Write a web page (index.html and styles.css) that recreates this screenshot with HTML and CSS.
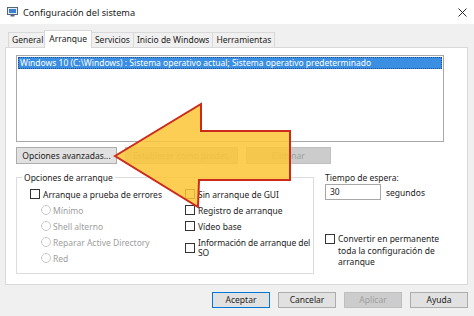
FILE: index.html
```html
<!DOCTYPE html>
<html lang="es">
<head>
<meta charset="utf-8">
<title>Configuración del sistema</title>
<link rel="stylesheet" href="styles.css">
</head>
<body>
<div class="window">
  <header class="titlebar">
    <svg class="title-icon" viewBox="0 0 11 10" width="11" height="10">
      <rect x="0.5" y="0.5" width="10" height="7" fill="#e8eef6" stroke="#56657a"/>
      <rect x="2" y="2" width="7" height="4" fill="#3b7fd0"/>
      <rect x="3.5" y="8" width="4" height="1.5" fill="#56657a"/>
    </svg>
    <span class="title">Configuración del sistema</span>
    <svg class="close" viewBox="0 0 9 9" width="9" height="9">
      <path d="M0.5 0.5 L8.5 8.5 M8.5 0.5 L0.5 8.5" stroke="#2b2b2b" stroke-width="1" fill="none"/>
    </svg>
  </header>
  <div class="body">
    <div class="tabs">
      <div class="tab">General</div>
      <div class="tab active">Arranque</div>
      <div class="tab">Servicios</div>
      <div class="tab">Inicio de Windows</div>
      <div class="tab">Herramientas</div>
    </div>
    <div class="panel">
      <div class="listbox">
        <div class="item">Windows 10 (C:\Windows) : Sistema operativo actual; Sistema operativo predeterminado</div>
      </div>
      <div class="btnrow">
        <button class="btn w-adv">Opciones avanzadas...</button>
        <button class="btn disabled w-set">Establecer como predet.</button>
        <button class="btn disabled w-del">Eliminar</button>
      </div>
      <div class="lower">
        <fieldset class="group">
          <legend>Opciones de arranque</legend>
          <div class="group-body">
            <div class="col-left">
              <div class="row"><span class="check"></span>Arranque a prueba de errores</div>
              <div class="row indent dis"><span class="radio"></span>Mínimo</div>
              <div class="row indent dis"><span class="radio"></span>Shell alterno</div>
              <div class="row indent dis"><span class="radio"></span>Reparar Active Directory</div>
              <div class="row indent dis"><span class="radio"></span>Red</div>
            </div>
            <div class="col-right">
              <div class="row"><span class="check"></span>Sin arranque de GUI</div>
              <div class="row"><span class="check"></span>Registro de arranque</div>
              <div class="row"><span class="check"></span>Vídeo base</div>
              <div class="multi"><span class="check"></span><span class="txt">Información de arranque del<br>SO</span></div>
            </div>
          </div>
        </fieldset>
        <div class="side">
          <div class="side-label">Tiempo de espera:</div>
          <div class="timeout">
            <div class="input">30</div>
            <span class="unit">segundos</span>
          </div>
          <div class="persist">
            <span class="check"></span>
            <span class="txt">Convertir en permanente<br>toda la configuración de<br>arranque</span>
          </div>
        </div>
      </div>
    </div>
    <div class="footer">
      <button class="btn fbtn default">Aceptar</button>
      <button class="btn fbtn">Cancelar</button>
      <button class="btn fbtn disabled">Aplicar</button>
      <button class="btn fbtn">Ayuda</button>
    </div>
  </div>
  <svg class="arrow" viewBox="0 0 474 316" width="474" height="316">
    <polygon points="115,156 201,104 201,131 290,131 290,180 199,180 198,207" fill="#fdc636" fill-opacity="0.85" stroke="#cc2a1c" stroke-width="2" stroke-linejoin="miter"/>
  </svg>
</div>
</body>
</html>
```
FILE: styles.css
```css
* { box-sizing: border-box; }
html, body { margin: 0; }
body {
  width: 474px;
  height: 316px;
  overflow: hidden;
  background: #f0f0f0;
  font-family: "Noto Sans", "DejaVu Sans", sans-serif;
  font-size: 8.5px;
  color: #1b1b1b;
}
.window { position: relative; width: 474px; height: 316px; }

.titlebar {
  height: 24px;
  background: #fff;
  display: flex;
  align-items: center;
  padding: 0 7px 0 7px;
}
.title-icon { flex: none; margin-right: 5px; }
.title { font-size: 9.2px; flex: 1; color: #1a1a1a; }
.close { flex: none; }

.body { padding: 0 6px 0 5px; }

.tabs {
  height: 23px;
  display: flex;
  align-items: flex-end;
  padding-left: 3px;
}
.tab {
  height: 15px;
  padding: 0 3px;
  border: 1px solid #d9d9d9;
  border-bottom: none;
  margin-right: -1px;
  line-height: 13px;
  background: #f0f0f0;
}
.tab.active {
  height: 18px;
  line-height: 15px;
  background: #fff;
  margin: 0 -1px -1px -2px;
  padding: 0 4px;
  position: relative;
  z-index: 1;
}

.panel {
  height: 238px;
  background: #fff;
  border: 1px solid #d9d9d9;
  padding: 7px 10px 0 10px;
}
.listbox {
  width: 428px;
  height: 87px;
  border: 1px solid #a8a8a8;
  padding: 1px;
}
.item {
  height: 12px;
  line-height: 12px;
  padding-left: 2px;
  background: #3a8fe3;
  color: #fff;
  outline: 1px dotted #1d4f91;
  outline-offset: -1px;
  white-space: nowrap;
}

.btnrow { display: flex; gap: 8px; margin-top: 5px; }
.btn {
  height: 17px;
  border: 1px solid #adadad;
  background: #e1e1e1;
  font: inherit;
  color: inherit;
  padding: 0;
  line-height: 15px;
  text-align: center;
}
.btn.disabled { background: #cccccc; border-color: #bfbfbf; color: #a0a0a0; }
.w-adv { width: 101px; }
.w-set { width: 113px; }
.w-del { width: 85px; }

.lower { display: flex; margin-top: 8px; }
.group {
  margin: 0;
  padding: 0 0 7px 0;
  border: 1px solid #dcdcdc;
  width: 298px;
  min-width: 0;
}
.group legend { margin-left: 5px; padding: 0 2px; line-height: 11px; }
.group-body { display: flex; padding: 3px 0 0 13px; }
.col-left { width: 155px; }
.row { height: 16px; display: flex; align-items: center; white-space: nowrap; }
.check {
  width: 10px;
  height: 10px;
  border: 1px solid #333;
  background: #fff;
  margin-right: 3px;
  flex: none;
}
.radio {
  width: 10px;
  height: 10px;
  border-radius: 50%;
  border: 1px solid #c9c9c9;
  margin-right: 2px;
  flex: none;
}
.indent { padding-left: 11px; }
.dis { color: #a0a0a0; }
.multi { display: flex; align-items: center; margin-top: 4px; }
.multi .txt { line-height: 10px; white-space: nowrap; letter-spacing: -0.1px; }

.side { margin-left: 11px; }
.side-label { line-height: 11px; }
.timeout { display: flex; align-items: center; margin-top: 1px; }
.input {
  width: 56px;
  height: 16px;
  border: 1px solid #a8a8a8;
  padding-left: 4px;
  line-height: 14px;
  background: #fff;
}
.unit { margin-left: 5px; }
.persist { display: flex; align-items: flex-start; margin-top: 33px; }
.persist .check { margin-top: 1px; }
.persist .txt { line-height: 11.5px; }

.footer { display: flex; justify-content: flex-end; gap: 8px; padding-top: 7px; }
.fbtn { width: 58px; height: 16px; line-height: 14px; }
.fbtn.default { border-color: #0078d7; }

.arrow { position: absolute; left: 0; top: 0; pointer-events: none; }
```
